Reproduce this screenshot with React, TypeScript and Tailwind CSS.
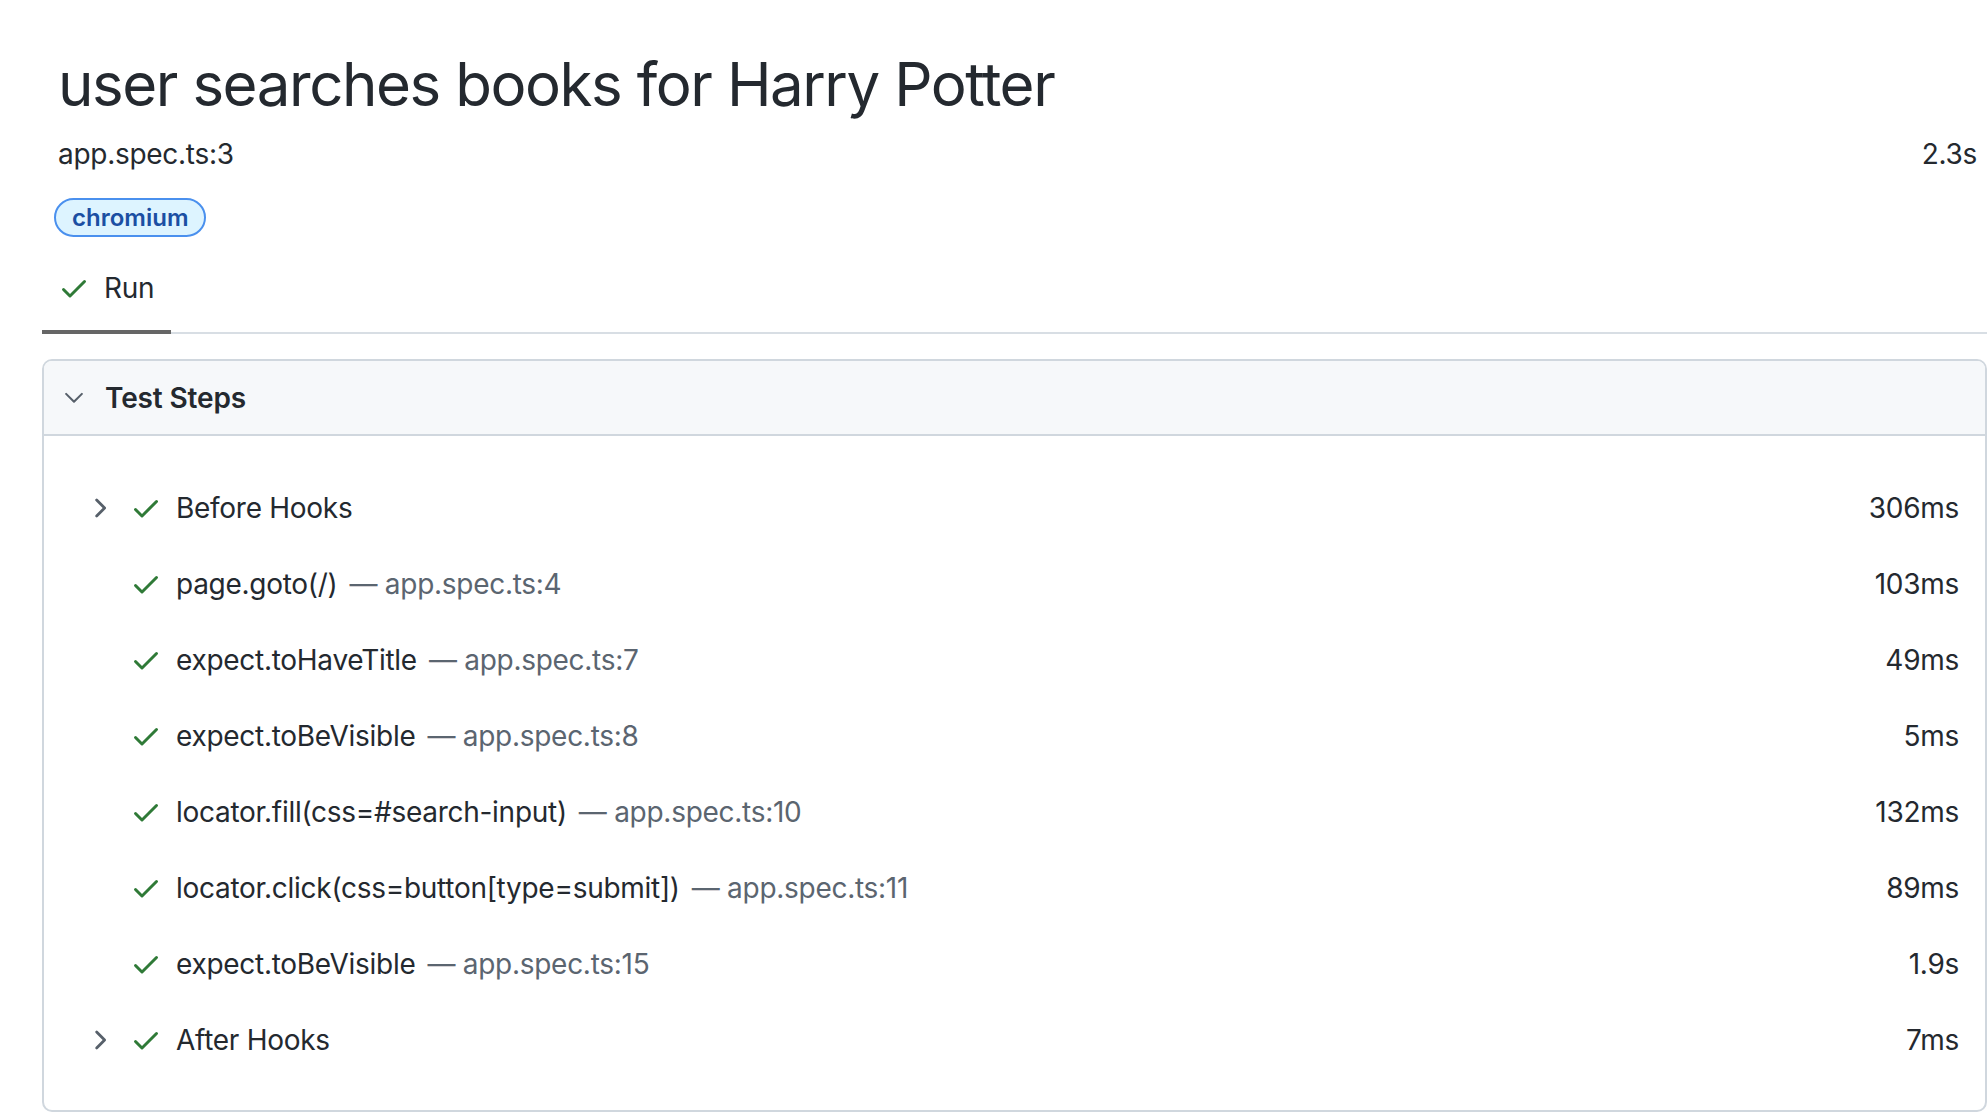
import React from "react";

const steps = [
  { title: "Before Hooks", time: "306ms", expandable: true },
  { title: "page.goto(/)", loc: "app.spec.ts:4", time: "103ms" },
  { title: "expect.toHaveTitle", loc: "app.spec.ts:7", time: "49ms" },
  { title: "expect.toBeVisible", loc: "app.spec.ts:8", time: "5ms" },
  { title: "locator.fill(css=#search-input)", loc: "app.spec.ts:10", time: "132ms" },
  { title: "locator.click(css=button[type=submit])", loc: "app.spec.ts:11", time: "89ms" },
  { title: "expect.toBeVisible", loc: "app.spec.ts:15", time: "1.9s" },
  { title: "After Hooks", time: "7ms", expandable: true },
];

const CheckIcon = ({ size = 32 }: { size?: number }) => (
  <svg width={size} height={size} viewBox="0 0 16 16" fill="#2f7a37" className="shrink-0">
    <path d="M13.78 4.22a.75.75 0 0 1 0 1.06l-7.25 7.25a.75.75 0 0 1-1.06 0L2.22 9.28a.75.75 0 0 1 1.06-1.06L6 10.94l6.72-6.72a.75.75 0 0 1 1.06 0Z" />
  </svg>
);

const ChevronRight = () => (
  <svg width={30} height={30} viewBox="0 0 16 16" fill="#57606a" className="shrink-0">
    <path d="M6.22 3.22a.75.75 0 0 1 1.06 0l4.25 4.25a.75.75 0 0 1 0 1.06l-4.25 4.25a.75.75 0 0 1-1.06-1.06L9.94 8 6.22 4.28a.75.75 0 0 1 0-1.06Z" />
  </svg>
);

const ChevronDown = () => (
  <svg width={30} height={30} viewBox="0 0 16 16" fill="#57606a" className="shrink-0">
    <path d="M12.6 5.4a.55.55 0 0 1 0 .78l-4.21 4.21a.55.55 0 0 1-.78 0L3.4 6.18a.55.55 0 0 1 .78-.78L8 9.22l3.82-3.82a.55.55 0 0 1 .78 0Z" />
  </svg>
);

export default function App() {
  return (
    <div className="min-h-screen w-full bg-white text-[#24292f] font-['Inter',sans-serif] overflow-hidden">
      <div className="pl-[42px]">
        {/* header */}
        <h1 className="pl-[16px] pt-[48px] text-[60px] leading-[72px] font-normal tracking-[-0.024em] text-[#24292f]">
          user searches books for Harry Potter
        </h1>
        <div className="mt-[14px] pl-[16px] pr-[10px] flex justify-between items-center text-[28px] leading-[40px] tracking-[-0.01em]">
          <span>app.spec.ts:3</span>
          <span>2.3s</span>
        </div>
        <div className="mt-[24px] ml-[12px] flex">
          <span className="h-[39px] px-[16px] flex items-center rounded-full border-2 border-[#4a90ee] bg-[#ddf4ff] text-[#1b4fa3] text-[24px] font-semibold">
            chromium
          </span>
        </div>

        {/* tabs */}
        <div className="mt-[12px] flex border-b-2 border-[#d8dee4]">
          <div className="-mb-[2px] pl-[16px] pr-[17px] pt-[19px] pb-[22px] flex items-center gap-[14px] border-b-4 border-[#666666]">
            <CheckIcon />
            <span className="text-[28px] leading-[40px] tracking-[-0.01em]">Run</span>
          </div>
        </div>

        {/* test steps card */}
        <div className="mt-[25px] border-2 border-[#d0d7de] rounded-[10px] overflow-hidden">
          <div className="h-[75px] bg-[#f6f8fa] border-b-2 border-[#d0d7de] pl-[15px] flex items-center gap-[16px]">
            <ChevronDown />
            <span className="text-[28px] leading-[40px] font-semibold tracking-[-0.005em]">Test Steps</span>
          </div>
          <div className="pt-[34px] pb-[32px] pl-[40px] pr-[26px]">
            {steps.map((s, i) => (
              <div key={i} className="h-[76px] flex items-center text-[28px] leading-[40px] tracking-[-0.01em]">
                <div className="w-[46px] flex">{s.expandable && <ChevronRight />}</div>
                <CheckIcon />
                <span className="ml-[14px] whitespace-nowrap">
                  {s.title}
                  {s.loc && <span className="ml-[12px] text-[#5b6570]">— {s.loc}</span>}
                </span>
                <span className="ml-auto">{s.time}</span>
              </div>
            ))}
          </div>
        </div>
      </div>
    </div>
  );
}
